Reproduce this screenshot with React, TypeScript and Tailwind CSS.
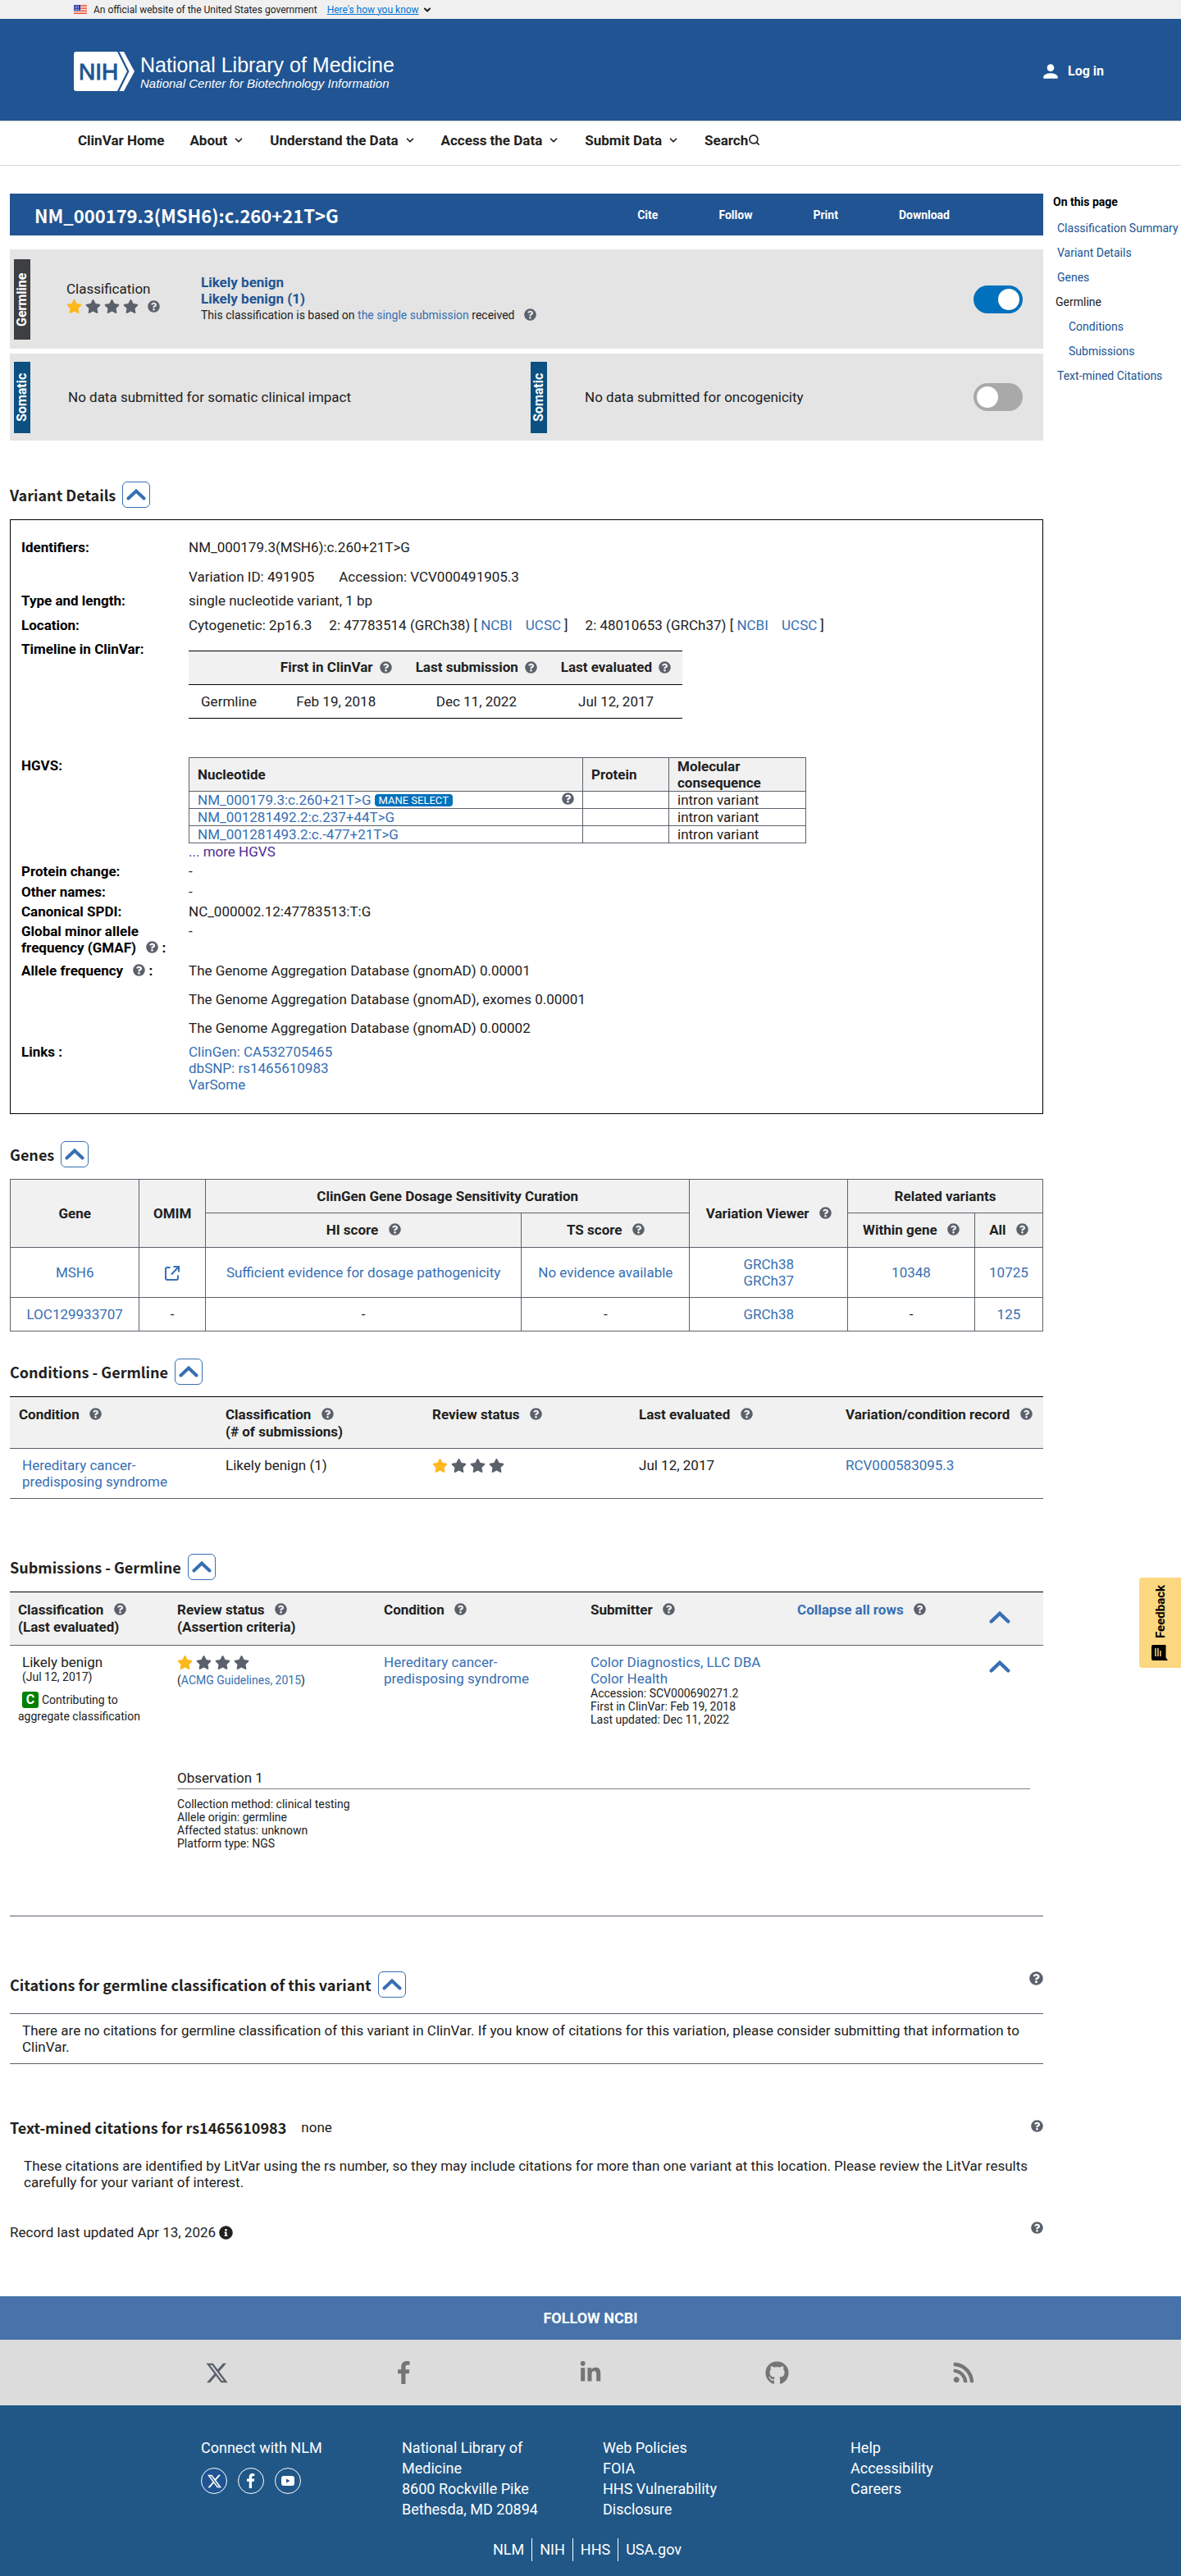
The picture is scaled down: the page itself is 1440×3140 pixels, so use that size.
import React, { useState } from 'react'
import { FaGithub, FaInfoCircle, FaLinkedinIn, FaQuestionCircle, FaRss, FaStar } from 'react-icons/fa'
import { FaXTwitter } from 'react-icons/fa6'
import { MdPerson } from 'react-icons/md'
import { ChevronDown, Search } from 'lucide-react'

const link = 'text-[#376fb3] hover:underline'

const Help: React.FC<{ className?: string; size?: number }> = ({ className = '', size = 15 }) => (
  <button type="button" aria-label="Help" className={`mb-1 inline-block align-middle text-[#5b616b] ${className}`}>
    <FaQuestionCircle size={size} />
  </button>
)

const Stars: React.FC = () => (
  <span className="inline-flex h-5 items-center gap-[5px]" aria-label="1 of 4 stars">
    {[0, 1, 2, 3].map((i) => (
      <FaStar key={i} size={19} className={i === 0 ? '-mr-px text-[#fdb81e]' : '-mr-px text-[#5b616b]'} />
    ))}
  </span>
)

const ChevronUp: React.FC<{ width?: number }> = ({ width = 24 }) => (
  <svg width={width} viewBox="0 0 24 14" fill="none" stroke="#376fb3" strokeWidth="4" strokeLinecap="round">
    <path d="M2.5 11.5 12 2.5l9.500 9" />
  </svg>
)

const ExternalLink: React.FC = () => (
  <svg width="18" height="18" viewBox="0 0 18 18" fill="none" stroke="#376fb3" strokeWidth="2">
    <path d="M6.500 2H3a2 2 0 0 0-2 2v11a2 2 0 0 0 2 2h11a2 2 0 0 0 2-2v-3.500" />
    <path d="M10.500 1H17v6.500M17 1 8 10.500" />
  </svg>
)

const FacebookIcon: React.FC<{ height: number }> = ({ height }) => (
  <svg height={height} viewBox="95 0 864 1664" fill="currentColor">
    <path d="M959 12v264h-157q-86 0-116 36t-30 108v189h293l-39 296h-254v759h-306v-759h-255v-296h255v-218q0-186 104-288.500t277-102.500q147 0 228 12z" />
  </svg>
)

const SectionHeading: React.FC<{ title: string; className?: string }> = ({ title, className = '' }) => (
  <div className={`flex items-center gap-2 ${className}`}>
    <h2 className="font-['Noto_Sans_CJK_SC',sans-serif] text-[18px] leading-8 font-bold">{title}</h2>
    <button
      type="button"
      aria-label={`Collapse ${title}`}
      className="flex h-8 w-[34px] items-center justify-center rounded-md border border-[#376fb3] bg-white"
    >
      <ChevronUp />
    </button>
  </div>
)

const Tag: React.FC<{ label: string; className: string }> = ({ label, className }) => (
  <div
    className={`flex w-5 shrink-0 rotate-180 items-center justify-center text-[16px] leading-5 font-bold text-white [writing-mode:vertical-rl] ${className}`}
  >
    {label}
  </div>
)

const Toggle: React.FC<{ label: string; defaultChecked?: boolean }> = ({ label, defaultChecked = false }) => {
  const [on, setOn] = useState(defaultChecked)
  return (
    <input
      type="checkbox"
      role="switch"
      aria-label={label}
      checked={on}
      onChange={(e) => setOn(e.target.checked)}
      className="h-[34px] w-[60px] shrink-0 appearance-none rounded-full bg-[#a9a9a9] p-1 before:block before:size-[26px] before:rounded-full before:bg-white checked:bg-[#0071bc] checked:before:ml-[26px]"
    />
  )
}

const Row: React.FC<{ label: React.ReactNode; className?: string; children: React.ReactNode }> = ({
  label,
  className = '',
  children
}) => (
  <div className={`flex ${className}`}>
    <dt className="w-[204px] shrink-0 font-bold text-black">{label}</dt>
    <dd className="min-w-0 flex-1">{children}</dd>
  </div>
)

const TopBanner: React.FC = () => (
  <div className="flex h-[23px] items-center bg-[#f0f0f0] px-[90px] text-[12px] leading-4">
    <svg width="16" height="11" viewBox="0 0 16 11" className="mr-2">
      <rect width="16" height="11" fill="#fff" />
      <path d="M0 .5h16M0 2.500h16M0 4.500h16M0 6.500h16M0 8.500h16M0 10.500h16" stroke="#db3e1f" />
      <rect width="8" height="7" fill="#1e33b1" />
      <path d="M1 1.500h6M1 3.500h6M1 5.500h6" stroke="#fff" strokeDasharray="1 1" />
    </svg>
    <span>An official website of the United States government</span>
    <button type="button" className="ml-3 flex items-center gap-1 text-[#0076d6]">
      <span className="underline">Here's how you know</span>
      <ChevronDown size={12} strokeWidth={4} className="text-[#1b1b1b]" />
    </button>
  </div>
)

const NlmLogo: React.FC = () => (
  <a href="#" className="flex items-center text-white">
    <svg width="74" height="48" viewBox="0 0 74 48" className="mr-[7px]">
      <path d="M3 0h50l12 24-12 24H3a3 3 0 0 1-3-3V3a3 3 0 0 1 3-3z" fill="#fff" />
      <path d="M55.500 0h5.500L74 24 61 48h-5.500l12-24z" fill="#fff" />
      <text x="6" y="34" fill="#205493" fontFamily="Liberation Sans, sans-serif" fontSize="28" stroke="#205493">
        NIH
      </text>
    </svg>
    <span className="flex flex-col pt-0.5 font-['Liberation_Sans',sans-serif]">
      <span className="text-[25px] leading-7">National Library of Medicine</span>
      <span className="text-[15px] leading-[18px] italic">National Center for Biotechnology Information</span>
    </span>
  </a>
)

const menu = ['About', 'Understand the Data', 'Access the Data', 'Submit Data']

const Header: React.FC = () => (
  <header>
    <div className="flex h-[124px] items-center justify-between bg-[#205493] pt-1 pr-[94px] pl-[90px]">
      <NlmLogo />
      <button type="button" className="flex items-center gap-2 text-[16px] font-bold text-white">
        <MdPerson size={26} />
        Log in
      </button>
    </div>
    <nav className="flex h-[55px] items-center gap-[31px] border-y border-[#d6d7d9] px-[95px] pb-2 font-bold">
      <a href="#">ClinVar Home</a>
      {menu.map((m) => (
        <button key={m} type="button" className="flex items-center gap-[7px]">
          {m}
          <ChevronDown size={14} strokeWidth={3} />
        </button>
      ))}
      <a href="#" className="flex items-center">
        Search
        <Search size={15} strokeWidth={2.5} />
      </a>
    </nav>
  </header>
)

const sideLinks = [
  { label: 'Classification Summary', className: 'pl-[5px] text-[#205493]' },
  { label: 'Variant Details', className: 'pl-[5px] text-[#205493]' },
  { label: 'Genes', className: 'pl-[5px] text-[#205493]' },
  { label: 'Germline', className: 'pl-[3px]' },
  { label: 'Conditions', className: 'pl-[19px] text-[#205493]' },
  { label: 'Submissions', className: 'pl-[19px] text-[#205493]' },
  { label: 'Text-mined Citations', className: 'pl-[5px] text-[#205493]' }
]

const SideNav: React.FC = () => (
  <aside className="w-[156px] shrink-0 text-[14px] leading-5">
    <p className="font-bold text-black">On this page</p>
    <ul className="mt-3 flex flex-col gap-[10px] whitespace-nowrap">
      {sideLinks.map((s) => (
        <li key={s.label} className={s.className}>
          {s.label === 'Germline' ? s.label : <a href="#">{s.label}</a>}
        </li>
      ))}
    </ul>
  </aside>
)

const Summary: React.FC = () => (
  <>
    <div className="flex h-[51px] items-center bg-[#205493] pr-[114px] pl-[30px] text-white">
      <h1 className="flex-1 font-['Noto_Sans_CJK_SC',sans-serif] text-[22px] leading-8 font-bold">
        NM_000179.3(MSH6):c.260+21T&gt;G
      </h1>
      <div className="flex gap-[74px] text-[14px] font-bold">
        {['Cite', 'Follow', 'Print', 'Download'].map((a) => (
          <button key={a} type="button">
            {a}
          </button>
        ))}
      </div>
    </div>

    <div className="mt-[17px] flex h-[121px] items-center bg-[#e4e4e4] pr-[25px] pl-[5px]">
      <Tag label="Germline" className="h-[98px] bg-[#3d3f42]" />
      <div className="ml-[44px] w-[164px] pb-0.5">
        <div>Classification</div>
        <div className="flex items-center gap-3">
          <Stars />
          <Help className="mt-1" />
        </div>
      </div>
      <div className="flex-1 font-bold text-[#205493]">
        <div>Likely benign</div>
        <div>Likely benign (1)</div>
        <div className="text-[14px] font-normal text-[#212121]">
          This classification is based on{' '}
          <a href="#" className={link}>
            the single submission
          </a>{' '}
          received <Help className="ml-2" />
        </div>
      </div>
      <Toggle label="Germline" defaultChecked />
    </div>

    <div className="mt-1.5 grid h-[106px] grid-cols-2 items-center bg-[#e4e4e4]">
      <div className="flex items-center gap-[46px] pl-[5px]">
        <Tag label="Somatic" className="h-[87px] bg-[#0b5081]" />
        No data submitted for somatic clinical impact
      </div>
      <div className="flex items-center gap-[46px] pr-[25px] pl-[5px]">
        <Tag label="Somatic" className="h-[87px] bg-[#0b5081]" />
        <span className="flex-1">No data submitted for oncogenicity</span>
        <Toggle label="Somatic" />
      </div>
    </div>
  </>
)

const hgvs = [
  { name: 'NM_000179.3:c.260+21T>G', mane: true },
  { name: 'NM_001281492.2:c.237+44T>G', mane: false },
  { name: 'NM_001281493.2:c.-477+21T>G', mane: false }
]

const cellBorder = 'border border-[#5b616b]'

const Assembly: React.FC<{ text: string }> = ({ text }) => (
  <span>
    {text} [{' '}
    <a href="#" className={link}>
      NCBI
    </a>{' '}
    <a href="#" className={`mr-1 ml-3 ${link}`}>
      UCSC
    </a>
    ]
  </span>
)

const VariantDetails: React.FC = () => (
  <dl className="border border-black px-[13px] pt-[23px] pb-[25px]">
    <Row label="Identifiers:">
      <div>NM_000179.3(MSH6):c.260+21T&gt;G</div>
      <div className="mt-4 flex gap-[30px]">
        <span>Variation ID: 491905</span>
        <span>Accession: VCV000491905.3</span>
      </div>
    </Row>
    <Row label="Type and length:" className="mt-[9px]">
      single nucleotide variant, 1 bp
    </Row>
    <Row label="Location:" className="mt-[10px]">
      <div className="flex gap-[21px]">
        <span>Cytogenetic: 2p16.3</span>
        <Assembly text="2: 47783514 (GRCh38)" />
        <Assembly text="2: 48010653 (GRCh37)" />
      </div>
    </Row>
    <Row label="Timeline in ClinVar:" className="mt-[9px]">
      <table className="mt-3 w-[602px] border-collapse text-center">
        <thead>
          <tr className="h-[41px] border-y border-black bg-[#f1f1f1]">
            <td className="w-[98px]"></td>
            {['First in ClinVar', 'Last submission', 'Last evaluated'].map((h) => (
              <th key={h} className="font-bold whitespace-nowrap">
                {h} <Help className="ml-1" />
              </th>
            ))}
          </tr>
        </thead>
        <tbody>
          <tr className="h-[41px] border-b border-black">
            <td>Germline</td>
            <td>Feb 19, 2018</td>
            <td>Dec 11, 2022</td>
            <td>Jul 12, 2017</td>
          </tr>
        </tbody>
      </table>
    </Row>
    <Row label="HGVS:" className="mt-[47px]">
      <table className="w-[753px] table-fixed border-collapse text-left">
        <thead>
          <tr className="h-[41px] bg-[#f1f1f1]">
            <th className={`px-[10px] font-bold ${cellBorder}`}>Nucleotide</th>
            <th className={`w-[105px] px-[10px] font-bold ${cellBorder}`}>Protein</th>
            <th className={`w-[167px] px-[10px] font-bold ${cellBorder}`}>Molecular consequence</th>
          </tr>
        </thead>
        <tbody>
          {hgvs.map((h) => (
            <tr key={h.name} className="h-[21px]">
              <td className={`px-[10px] ${cellBorder}`}>
                <div className="flex items-center">
                  <a href="#" className={link}>
                    {h.name}
                  </a>
                  {h.mane && (
                    <>
                      <span className="ml-1 rounded-sm bg-[#0071bc] px-[5px] text-[13px] leading-[15px] text-white">
                        MANE SELECT
                      </span>
                      <Help className="ml-auto" />
                    </>
                  )}
                </div>
              </td>
              <td className={cellBorder}></td>
              <td className={`px-[10px] ${cellBorder}`}>intron variant</td>
            </tr>
          ))}
        </tbody>
      </table>
      <a href="#" className="text-[#4c2c92]">
        ... more HGVS
      </a>
    </Row>
    <Row label="Protein change:" className="mt-1">
      -
    </Row>
    <Row label="Other names:" className="mt-[5px]">
      -
    </Row>
    <Row label="Canonical SPDI:" className="mt-1">
      NC_000002.12:47783513:T:G
    </Row>
    <Row
      label={
        <>
          Global minor allele
          <br />
          frequency (GMAF) <Help className="ml-2" /> :
        </>
      }
      className="mt-1"
    >
      -
    </Row>
    <Row
      label={
        <>
          Allele frequency <Help className="ml-2" /> :
        </>
      }
      className="mt-[7px]"
    >
      <div className="flex flex-col gap-[15px]">
        <div>The Genome Aggregation Database (gnomAD) 0.00001</div>
        <div>The Genome Aggregation Database (gnomAD), exomes 0.00001</div>
        <div>The Genome Aggregation Database (gnomAD) 0.00002</div>
      </div>
    </Row>
    <Row label="Links :" className="mt-[9px]">
      {['ClinGen: CA532705465', 'dbSNP: rs1465610983', 'VarSome'].map((l) => (
        <div key={l}>
          <a href="#" className={link}>
            {l}
          </a>
        </div>
      ))}
    </Row>
  </dl>
)

const Genes: React.FC = () => (
  <table className="w-full table-fixed border-collapse text-center [&_td]:border [&_td]:border-[#5b616b] [&_td]:py-[10px] [&_th]:border [&_th]:border-[#5b616b] [&_th]:bg-[#f1f1f1] [&_th]:py-[10px] [&_th]:font-bold">
    <colgroup>
      <col className="w-[12.5%]" />
      <col className="w-[6.4%]" />
      <col />
      <col className="w-[16.3%]" />
      <col className="w-[15.3%]" />
      <col className="w-[12.3%]" />
      <col className="w-[6.6%]" />
    </colgroup>
    <thead>
      <tr>
        <th rowSpan={2}>Gene</th>
        <th rowSpan={2}>OMIM</th>
        <th colSpan={2}>ClinGen Gene Dosage Sensitivity Curation</th>
        <th rowSpan={2}>
          Variation Viewer <Help className="ml-2" />
        </th>
        <th colSpan={2}>Related variants</th>
      </tr>
      <tr className="h-[42px]">
        <th>
          HI score <Help className="ml-2" />
        </th>
        <th>
          TS score <Help className="ml-2" />
        </th>
        <th>
          Within gene <Help className="ml-2" />
        </th>
        <th>
          All <Help className="ml-2" />
        </th>
      </tr>
    </thead>
    <tbody>
      <tr>
        <td>
          <a href="#" className={link}>MSH6</a>
        </td>
        <td>
          <a href="#" aria-label="OMIM record" className="inline-block align-middle">
            <ExternalLink />
          </a>
        </td>
        <td>
          <a href="#" className={link}>Sufficient evidence for dosage pathogenicity</a>
        </td>
        <td>
          <a href="#" className={link}>No evidence available</a>
        </td>
        <td>
          <a href="#" className={link}>GRCh38</a>
          <br />
          <a href="#" className={link}>GRCh37</a>
        </td>
        <td>
          <a href="#" className={link}>10348</a>
        </td>
        <td>
          <a href="#" className={link}>10725</a>
        </td>
      </tr>
      <tr>
        <td>
          <a href="#" className={link}>LOC129933707</a>
        </td>
        <td>-</td>
        <td>-</td>
        <td>-</td>
        <td>
          <a href="#" className={link}>GRCh38</a>
        </td>
        <td>-</td>
        <td>
          <a href="#" className={link}>125</a>
        </td>
      </tr>
    </tbody>
  </table>
)

const Conditions: React.FC = () => (
  <table className="w-full table-fixed border-collapse text-left">
    <thead>
      <tr className="border-t border-b border-t-black border-b-[#5b616b] bg-[#f1f1f1] align-top">
        {['Condition', 'Classification', 'Review status', 'Last evaluated', 'Variation/condition record'].map((h) => (
          <th key={h} className="pt-[11px] pb-[10px] pl-[11px] font-bold whitespace-nowrap">
            {h} <Help className="ml-2" />
            {h === 'Classification' && <div>(# of submissions)</div>}
          </th>
        ))}
      </tr>
    </thead>
    <tbody>
      <tr className="border-b border-[#5b616b] align-top">
        <td className="py-[10px] pr-[50px] pl-[15px]">
          <a href="#" className={link}>
            Hereditary cancer-predisposing syndrome
          </a>
        </td>
        <td className="py-[10px] pl-[11px]">Likely benign (1)</td>
        <td className="py-[10px] pl-[11px]">
          <Stars />
        </td>
        <td className="py-[10px] pl-[11px]">Jul 12, 2017</td>
        <td className="py-[10px] pl-[11px]">
          <a href="#" className={link}>
            RCV000583095.3
          </a>
        </td>
      </tr>
    </tbody>
  </table>
)

const Submissions: React.FC = () => (
  <table className="w-full table-fixed border-collapse text-left">
    <colgroup>
      <col className="w-[15.4%]" />
      <col className="w-[20%]" />
      <col className="w-[20%]" />
      <col className="w-[20%]" />
      <col />
    </colgroup>
    <thead>
      <tr className="border-t border-b border-t-black border-b-[#5b616b] bg-[#f1f1f1] align-top [&_th]:pt-[11px] [&_th]:pb-3 [&_th]:pl-[10px] [&_th]:font-bold">
        <th>
          Classification <Help className="ml-2" />
          <div>(Last evaluated)</div>
        </th>
        <th>
          Review status <Help className="ml-2" />
          <div>(Assertion criteria)</div>
        </th>
        <th>
          Condition <Help className="ml-2" />
        </th>
        <th>
          Submitter <Help className="ml-2" />
        </th>
        <th>
          <div className="flex justify-between pr-10">
            <span>
              <button type="button" className="font-bold text-[#376fb3]">
                Collapse all rows
              </button>{' '}
              <Help className="ml-2" />
            </span>
            <button type="button" aria-label="Collapse all" className="pt-3">
              <ChevronUp width={26} />
            </button>
          </div>
        </th>
      </tr>
    </thead>
    <tbody>
      <tr className="align-top [&_td]:pt-[10px] [&_td]:pl-[10px]">
        <td>
          <div className="pl-[5px]">Likely benign</div>
          <div className="pl-[5px] text-[14px] leading-4">(Jul 12, 2017)</div>
          <div className="mt-[10px] text-[14px] leading-5">
            <div className="flex items-center gap-1 pl-[5px]">
              <span className="w-5 rounded-[3px] bg-[#008000] text-center text-[16px] font-bold text-white">C</span>
              <span>Contributing to</span>
            </div>
            <div>aggregate classification</div>
          </div>
        </td>
        <td>
          <Stars />
          <div className="text-[14px] leading-4">
            (
            <a href="#" className={link}>
              ACMG Guidelines, 2015
            </a>
            )
          </div>
        </td>
        <td>
          <a href="#" className={`block pr-[50px] ${link}`}>
            Hereditary cancer-predisposing syndrome
          </a>
        </td>
        <td>
          <a href="#" className={`block pr-5 ${link}`}>
            Color Diagnostics, LLC DBA Color Health
          </a>
          <div className="text-[14px] leading-4">
            <div>Accession: SCV000690271.2</div>
            <div>First in ClinVar: Feb 19, 2018</div>
            <div>Last updated: Dec 11, 2022</div>
          </div>
        </td>
        <td>
          <div className="flex justify-end pt-2 pr-10">
            <button type="button" aria-label="Collapse row">
              <ChevronUp width={26} />
            </button>
          </div>
        </td>
      </tr>
      <tr className="border-b border-[#5b616b]">
        <td></td>
        <td colSpan={4} className="pt-[53px] pr-4 pb-20 pl-[10px]">
          <div className="border-b border-[#808080] pb-[3px]">Observation 1</div>
          <div className="pt-[10px] text-[14px] leading-4">
            <div>Collection method: clinical testing</div>
            <div>Allele origin: germline</div>
            <div>Affected status: unknown</div>
            <div>Platform type: NGS</div>
          </div>
        </td>
      </tr>
    </tbody>
  </table>
)

const Citations: React.FC = () => (
  <>
    <div className="mt-[67px] flex items-start justify-between">
      <SectionHeading title="Citations for germline classification of this variant" />
      <Help size={17} />
    </div>
    <p className="mt-[19px] border-y border-[#5b616b] px-[15px] py-[10px]">
      There are no citations for germline classification of this variant in ClinVar. If you know of citations for this
      variation, please consider submitting that information to ClinVar.
    </p>
    <div className="mt-[61px] flex items-center justify-between">
      <div className="flex items-center gap-[18px]">
        <h2 className="font-['Noto_Sans_CJK_SC',sans-serif] text-[18px] leading-8 font-bold">
          Text-mined citations for rs1465610983
        </h2>
        <span>none</span>
      </div>
      <Help />
    </div>
    <p className="mt-[21px] pr-2 pl-[17px]">
      These citations are identified by LitVar using the rs number, so they may include citations for more than one
      variant at this location. Please review the LitVar results carefully for your variant of interest.
    </p>
    <div className="mt-[38px] flex items-start justify-between pb-[68px]">
      <span className="flex items-center gap-1 pt-[3px]">
        Record last updated Apr 13, 2026
        <FaInfoCircle size={17} />
      </span>
      <Help />
    </div>
  </>
)

const social = [
  { label: 'X', icon: <FaXTwitter size={29} className="text-[#5b616b]" /> },
  { label: 'Facebook', icon: <FacebookIcon height={28} /> },
  { label: 'LinkedIn', icon: <FaLinkedinIn size={28} /> },
  { label: 'GitHub', icon: <FaGithub size={29} /> },
  { label: 'Blog', icon: <FaRss size={28} /> }
]

const circle = 'flex size-8 items-center justify-center rounded-full border border-white'

const Footer: React.FC = () => (
  <footer>
    <div className="bg-[#4773aa] py-4 text-center text-[18px] leading-[21px] font-bold text-white">FOLLOW NCBI</div>
    <div className="flex h-20 items-center justify-center bg-[#dcdcdc] px-[151px] text-[#757575]">
      {social.map((s) => (
        <a key={s.label} href="#" aria-label={s.label} className="flex flex-1 justify-center">
          {s.icon}
        </a>
      ))}
    </div>
    <div className="bg-[#205787] px-[245px] pt-[39px] pb-[19px] text-[18px] leading-[25px] text-white">
      <div className="flex">
        <div className="w-[245px]">
          Connect with NLM
          <div className="mt-3 flex gap-[13px]">
            <a href="#" aria-label="NLM on X" className={`bg-[#205493] ${circle}`}>
              <FaXTwitter size={19} />
            </a>
            <a href="#" aria-label="NLM on Facebook" className={circle}>
              <FacebookIcon height={18} />
            </a>
            <a href="#" aria-label="NLM on YouTube" className={circle}>
              <svg width="16" height="12" viewBox="0 0 16 12">
                <rect width="16" height="12" rx="3" fill="#fff" />
                <path d="M6 3.500v5L10.500 6z" fill="#205787" />
              </svg>
            </a>
          </div>
        </div>
        <div className="w-[245px]">
          <a href="#">
            National Library of
            <br />
            Medicine
          </a>
          <br />
          <a href="#">
            8600 Rockville Pike
            <br />
            Bethesda, MD 20894
          </a>
        </div>
        <div className="flex w-[302px] flex-col">
          <a href="#">Web Policies</a>
          <a href="#">FOIA</a>
          <a href="#">
            HHS Vulnerability
            <br />
            Disclosure
          </a>
        </div>
        <div className="flex flex-col">
          <a href="#">Help</a>
          <a href="#">Accessibility</a>
          <a href="#">Careers</a>
        </div>
      </div>
      <div className="mt-[23px] flex justify-center divide-x divide-white pr-2 leading-7">
        {['NLM', 'NIH', 'HHS', 'USA.gov'].map((l) => (
          <a key={l} href="#" className="px-[9px]">
            {l}
          </a>
        ))}
      </div>
    </div>
  </footer>
)

const Feedback: React.FC = () => (
  <button
    type="button"
    className="absolute top-[1923px] right-0 flex h-[110px] w-[51px] rotate-180 items-center justify-center gap-2 rounded-r bg-[#fbd780] text-[15px] font-bold text-black [writing-mode:vertical-rl]"
  >
    <svg width="20" height="19" viewBox="0 0 20 19" className="rotate-180">
      <path d="M2 0h15.500v15.500L20 19H2a2 2 0 0 1-2-2V2a2 2 0 0 1 2-2z" />
      <path d="M5 4v10M8 4v10M11 7v7" stroke="#fbd780" strokeWidth="1.500" />
    </svg>
    Feedback
  </button>
)

const App: React.FC = () => (
  <div className="relative bg-white font-['Roboto',sans-serif] text-[17px] leading-5 text-[#212121]">
    <TopBanner />
    <Header />
    <div className="flex gap-3 pt-[34px] pl-3">
      <main className="min-w-0 flex-1">
        <Summary />
        <SectionHeading title="Variant Details" className="mt-[50px] mb-[14px]" />
        <VariantDetails />
        <SectionHeading title="Genes" className="mt-[33px] mb-[14px]" />
        <Genes />
        <SectionHeading title="Conditions - Germline" className="mt-[33px] mb-[14px]" />
        <Conditions />
        <SectionHeading title="Submissions - Germline" className="mt-[67px] mb-[14px]" />
        <Submissions />
        <Citations />
      </main>
      <SideNav />
    </div>
    <Footer />
    <Feedback />
  </div>
)

export default App
